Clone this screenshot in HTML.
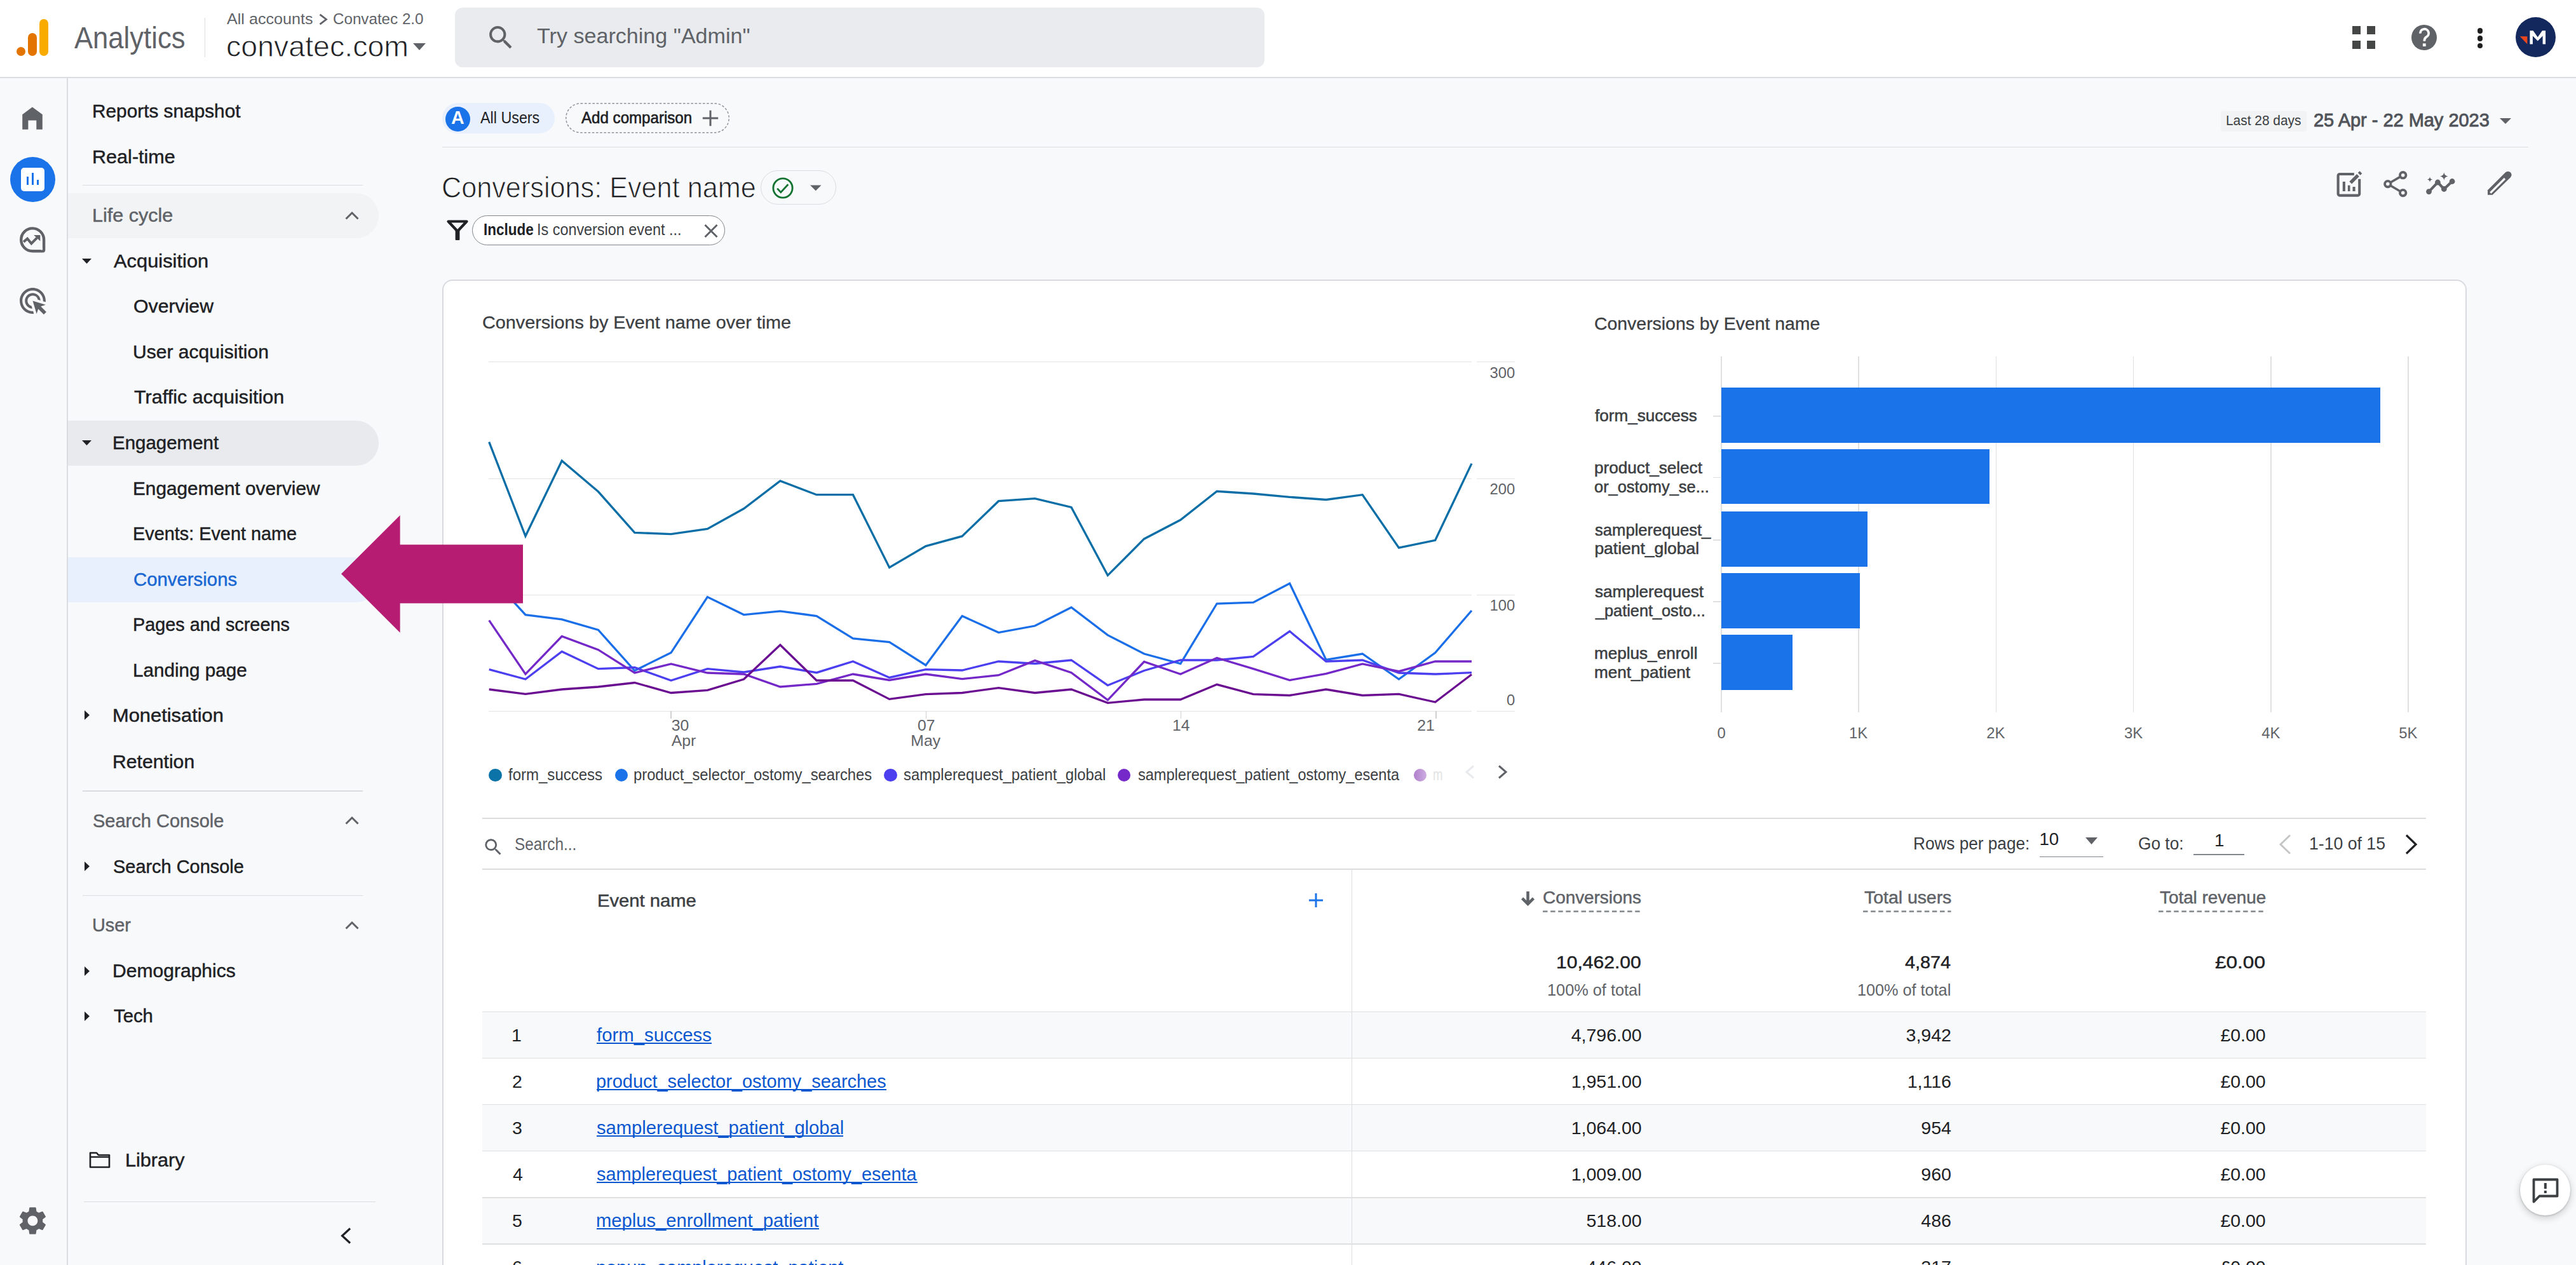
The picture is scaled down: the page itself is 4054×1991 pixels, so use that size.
<!DOCTYPE html>
<html><head><meta charset="utf-8"><title>Analytics</title>
<style>
html,body{margin:0;padding:0;}
body{width:4054px;height:1991px;overflow:hidden;position:relative;background:#f8f9fa;
font-family:"Liberation Sans", sans-serif;}
.t{position:absolute;white-space:pre;line-height:1;transform-origin:0 0;}
svg{overflow:visible;}
</style></head><body>
<div style="position:absolute;left:0.00px;top:0.00px;width:4054.00px;height:121.00px;background:#ffffff;"></div>
<div style="position:absolute;left:0.00px;top:121.00px;width:4054.00px;height:1.50px;background:#dadce0;"></div>
<div style="position:absolute;left:25.5px;top:74px;width:14px;height:14px;border-radius:7px;background:#e37400"></div>
<div style="position:absolute;left:44.3px;top:51.5px;width:14.2px;height:36px;border-radius:7.1px;background:#e37400"></div>
<div style="position:absolute;left:62.2px;top:29.5px;width:14.2px;height:58px;border-radius:7.1px;background:#f9ab00"></div>
<div style="position:absolute;left:321.50px;top:28.00px;width:1.80px;height:62.00px;background:#dadce0;"></div>
<svg style="position:absolute;left:501.00px;top:21.00px;" width="16.00" height="19.00" viewBox="0 0 16 19"><path d="M2.5 1.8 12.5 9.5 2.5 17.2" fill="none" stroke="#5f6368" stroke-width="2.8"/></svg>
<svg style="position:absolute;left:650.00px;top:68.00px;" width="20.00" height="11.00" viewBox="0 0 20 11"><path d="M0 0h20L10 11z" fill="#5f6368"/></svg>
<div style="position:absolute;left:716.00px;top:11.50px;width:1274.00px;height:94.50px;background:#e9ebee;border-radius:12px;"></div>
<svg style="position:absolute;left:763.90px;top:34.70px;" width="48.60" height="48.60" viewBox="0 0 24 24"><path d="M15.5 14h-.79l-.28-.27A6.47 6.47 0 0 0 16 9.5 6.5 6.5 0 1 0 9.5 16c1.61 0 3.09-.59 4.23-1.57l.27.28v.79l5 4.99L20.49 19zm-6 0C7.01 14 5 11.99 5 9.5S7.01 5 9.5 5 14 7.01 14 9.5 11.99 14 9.5 14" fill="#5f6368"/></svg>
<div style="position:absolute;left:3702.00px;top:41.00px;width:13.00px;height:13.00px;background:#444746;"></div>
<div style="position:absolute;left:3724.50px;top:41.00px;width:13.00px;height:13.00px;background:#444746;"></div>
<div style="position:absolute;left:3702.00px;top:63.50px;width:13.00px;height:13.00px;background:#444746;"></div>
<div style="position:absolute;left:3724.50px;top:63.50px;width:13.00px;height:13.00px;background:#444746;"></div>
<div style="position:absolute;left:3795.1px;top:38.7px;width:40.4px;height:40.4px;border-radius:21px;background:#5f6368"></div>
<svg style="position:absolute;left:0.00px;top:0.00px;" width="4054.00" height="130.00" viewBox="0 0 4054 130"><path d="M3808.9 52.6a6.6 6.6 0 1 1 9.6 5.6c-2.4 1.4-3.2 2.9-3.2 6.6" fill="none" stroke="#ffffff" stroke-width="3.7"/><rect x="3812.9" y="68.4" width="4.8" height="4.6" fill="#ffffff"/></svg>
<div style="position:absolute;left:3898.7px;top:44.0px;width:8.6px;height:8.6px;border-radius:5px;background:#1f1f1f"></div>
<div style="position:absolute;left:3898.7px;top:56.0px;width:8.6px;height:8.6px;border-radius:5px;background:#1f1f1f"></div>
<div style="position:absolute;left:3898.7px;top:67.9px;width:8.6px;height:8.6px;border-radius:5px;background:#1f1f1f"></div>
<div style="position:absolute;left:3958.6px;top:27.1px;width:63px;height:63px;border-radius:32px;background:#13285c"></div>
<svg style="position:absolute;left:0.00px;top:0.00px;" width="4054.00" height="130.00" viewBox="0 0 4054 130"><path d="M3965.7 57.3H3977.3V69.5Z" fill="#e8461e"/><path d="M3981.4 69.5V48.3H3986.6L3993.75 58.6 4000.9 48.3H4006.1V69.5H4001.6V56.6L3993.75 64.6 3985.9 56.6V69.5Z" fill="#ffffff"/></svg>
<div style="position:absolute;left:0.00px;top:122.50px;width:105.00px;height:1868.50px;background:#f8f9fa;"></div>
<div style="position:absolute;left:105.00px;top:122.50px;width:1.50px;height:1868.50px;background:#dadce0;"></div>
<svg style="position:absolute;left:0;top:0" width="120" height="220" viewBox="0 0 120 220"><path d="M35.2 203.7V180.2L50.9 168.5 66.8 180.2V203.7H57.3V189.6H44.4V203.7Z" fill="#5f6368"/></svg>
<div style="position:absolute;left:15.6px;top:246.6px;width:71.6px;height:71.6px;border-radius:36px;background:#1a73e8"></div>
<div style="position:absolute;left:33px;top:263.5px;width:37px;height:37px;border-radius:5px;background:#ffffff"></div>
<div style="position:absolute;left:41.60px;top:278.00px;width:3.30px;height:12.80px;background:#1a73e8;"></div>
<div style="position:absolute;left:49.90px;top:272.30px;width:3.00px;height:18.50px;background:#1a73e8;"></div>
<div style="position:absolute;left:58.00px;top:283.30px;width:3.20px;height:7.50px;background:#1a73e8;"></div>
<svg style="position:absolute;left:31.40px;top:357.50px;" width="40.30" height="39.00" viewBox="0 0 40.3 39"><path d="M38.1 19.5A17.95 17.95 0 1 0 20.15 37.3H36.1Q38.1 37.3 38.1 35.3Z" fill="none" stroke="#5f6368" stroke-width="4.4"/><polyline points="6.1,22.8 12.1,17.7 18.4,25.2 27.2,16.4" fill="none" stroke="#5f6368" stroke-width="4"/><path d="M22.2 12.1H32.3V21.5Z" fill="#5f6368"/><circle cx="34.6" cy="34" r="1.6" fill="#f8f9fa"/></svg>
<svg style="position:absolute;left:26.60px;top:448.50px;" width="49.00" height="49.00" viewBox="0 0 24 24"><path d="M11.71 17.99A5.993 5.993 0 0 1 6 12c0-3.31 2.69-6 6-6 3.22 0 5.84 2.53 5.99 5.71l-2.1-.63A3.999 3.999 0 0 0 12 8c-2.21 0-4 1.79-4 4 0 1.89 1.31 3.47 3.08 3.89zM22 12c0 .3-.01.6-.04.9l-1.97-.59c.01-.1.01-.21.01-.31 0-4.42-3.58-8-8-8s-8 3.58-8 8 3.58 8 8 8c.1 0 .21 0 .31-.01l.59 1.97c-.3.03-.6.04-.9.04-5.52 0-10-4.48-10-10S6.48 2 12 2s10 4.48 10 10m-3.77 4.26L22 15l-10-3 3 10 1.26-3.77 4.27 4.27 1.98-1.98z" fill="#5f6368"/></svg>
<svg style="position:absolute;left:24.90px;top:1895.00px;" width="52.80" height="52.80" viewBox="0 0 24 24"><path d="M19.14 12.94c.04-.3.06-.61.06-.94 0-.32-.02-.64-.07-.94l2.03-1.58a.49.49 0 0 0 .12-.61l-1.92-3.32a.488.488 0 0 0-.59-.22l-2.39.96c-.5-.38-1.03-.7-1.62-.94l-.36-2.54a.484.484 0 0 0-.48-.41h-3.84c-.24 0-.43.17-.47.41l-.36 2.54c-.59.24-1.13.57-1.62.94l-2.39-.96c-.22-.08-.47 0-.59.22L2.74 8.87c-.12.21-.08.47.12.61l2.03 1.58c-.05.3-.09.63-.09.94s.02.64.07.94l-2.03 1.58a.49.49 0 0 0-.12.61l1.92 3.32c.12.22.37.29.59.22l2.39-.96c.5.38 1.03.7 1.62.94l.36 2.54c.05.24.24.41.48.41h3.84c.24 0 .44-.17.47-.41l.36-2.54c.59-.24 1.13-.56 1.62-.94l2.39.96c.22.08.47 0 .59-.22l1.92-3.32c.12-.22.07-.47-.12-.61zM12 15.6c-1.98 0-3.6-1.62-3.6-3.6s1.62-3.6 3.6-3.6 3.6 1.62 3.6 3.6-1.62 3.6-3.6 3.6" fill="#5f6368"/></svg>
<div style="position:absolute;left:106.5px;top:304px;width:489.5px;height:71px;border-radius:0 36px 36px 0;background:#f1f3f4"></div>
<div style="position:absolute;left:106.5px;top:662px;width:489.5px;height:71px;border-radius:0 36px 36px 0;background:#e8eaed"></div>
<div style="position:absolute;left:106.5px;top:877px;width:489.5px;height:71px;border-radius:0 36px 36px 0;background:#e8f0fe"></div>
<div style="position:absolute;left:130.00px;top:290.50px;width:441.00px;height:1.50px;background:#dadce0;"></div>
<svg style="position:absolute;left:542.00px;top:331.00px;" width="24.00" height="16.00" viewBox="0 0 24 16"><path d="M2.5 13.5 12 4l9.5 9.5" fill="none" stroke="#5f6368" stroke-width="3"/></svg>
<svg style="position:absolute;left:128.50px;top:407.00px;" width="15.00" height="8.00" viewBox="0 0 15 8"><path d="M0 0h15L7.5 8z" fill="#202124"/></svg>
<svg style="position:absolute;left:128.50px;top:693.00px;" width="15.00" height="8.00" viewBox="0 0 15 8"><path d="M0 0h15L7.5 8z" fill="#202124"/></svg>
<svg style="position:absolute;left:132.60px;top:1117.50px;" width="8.00" height="15.00" viewBox="0 0 8 15"><path d="M0 0v15L8 7.5z" fill="#202124"/></svg>
<div style="position:absolute;left:130.00px;top:1244.00px;width:441.00px;height:1.50px;background:#dadce0;"></div>
<svg style="position:absolute;left:542.00px;top:1282.50px;" width="24.00" height="16.00" viewBox="0 0 24 16"><path d="M2.5 13.5 12 4l9.5 9.5" fill="none" stroke="#5f6368" stroke-width="3"/></svg>
<svg style="position:absolute;left:132.60px;top:1356.00px;" width="8.00" height="15.00" viewBox="0 0 8 15"><path d="M0 0v15L8 7.5z" fill="#202124"/></svg>
<div style="position:absolute;left:130.00px;top:1408.50px;width:441.00px;height:1.50px;background:#dadce0;"></div>
<svg style="position:absolute;left:542.00px;top:1447.50px;" width="24.00" height="16.00" viewBox="0 0 24 16"><path d="M2.5 13.5 12 4l9.5 9.5" fill="none" stroke="#5f6368" stroke-width="3"/></svg>
<svg style="position:absolute;left:132.60px;top:1520.50px;" width="8.00" height="15.00" viewBox="0 0 8 15"><path d="M0 0v15L8 7.5z" fill="#202124"/></svg>
<svg style="position:absolute;left:132.60px;top:1591.50px;" width="8.00" height="15.00" viewBox="0 0 8 15"><path d="M0 0v15L8 7.5z" fill="#202124"/></svg>
<svg style="position:absolute;left:139.00px;top:1810.00px;" width="36.00" height="30.00" viewBox="0 0 36 30"><path d="M3 4.5h10l3 3.5h17v19H3z" fill="none" stroke="#202124" stroke-width="2.6" stroke-linejoin="round"/><path d="M3 11h30" stroke="#202124" stroke-width="2.4"/></svg>
<div style="position:absolute;left:132.00px;top:1890.50px;width:459.00px;height:1.50px;background:#dadce0;"></div>
<svg style="position:absolute;left:532.00px;top:1931.00px;" width="24.00" height="28.00" viewBox="0 0 24 28"><path d="M19 2.5 6.5 14 19 25.5" fill="none" stroke="#202124" stroke-width="3.2"/></svg>
<div style="position:absolute;left:696.4px;top:162.4px;width:177px;height:47.8px;border-radius:24px;background:#e8f0fe"></div>
<div style="position:absolute;left:700.6px;top:167.5px;width:39px;height:39px;border-radius:20px;background:#1a73e8"></div>
<svg style="position:absolute;left:889.80px;top:162.40px;" width="258.00" height="47.50" viewBox="0 0 258 47.5"><rect x="0.75" y="0.75" width="256.5" height="46" rx="23" fill="none" stroke="#8f9499" stroke-width="1.5" stroke-dasharray="3.6 2.6"/></svg>
<svg style="position:absolute;left:1105.00px;top:173.00px;" width="26.00" height="26.00" viewBox="0 0 26 26"><path d="M13 0.8v24.4M0.8 13h24.4" stroke="#5f6368" stroke-width="3"/></svg>
<div style="position:absolute;left:696.00px;top:230.50px;width:3283.00px;height:1.50px;background:#dadce0;"></div>
<div style="position:absolute;left:3495.00px;top:174.60px;width:135.00px;height:32.40px;background:#f1f3f4;border-radius:3px;"></div>
<svg style="position:absolute;left:3934.00px;top:186.00px;" width="18.00" height="9.00" viewBox="0 0 18 9"><path d="M0 0h18L9 9z" fill="#5f6368"/></svg>
<div style="position:absolute;left:1197.2px;top:267.6px;width:118.6px;height:54.8px;border-radius:28px;border:1.6px solid #dadce0;box-sizing:border-box"></div>
<svg style="position:absolute;left:1215.00px;top:278.50px;" width="34.00" height="34.00" viewBox="0 0 34 34"><circle cx="17" cy="17" r="15.1" fill="none" stroke="#137333" stroke-width="2.9"/><path d="M8.2 17.6l5.6 6L25.3 11.2" fill="none" stroke="#137333" stroke-width="2.8"/></svg>
<svg style="position:absolute;left:1275.00px;top:291.00px;" width="17.50" height="9.50" viewBox="0 0 18 9"><path d="M0 0h18L9 9z" fill="#5f6368"/></svg>
<svg style="position:absolute;left:0;top:0" width="4054" height="1991" viewBox="0 0 4054 1991"><path d="M3704.8 273.95H3682.1a2.5 2.5 0 0 0-2.5 2.5V305.1a2.5 2.5 0 0 0 2.5 2.5H3710.7a2.5 2.5 0 0 0 2.5-2.5V281.8" fill="none" stroke="#5f6368" stroke-width="4.1"/><path d="M3699.2 287.6 3710.9 275.9M3712.7 273.9 3715.4 271.2" stroke="#5f6368" stroke-width="5.4"/><rect x="3686.8" y="285.9" width="4.1" height="15.1" fill="#5f6368"/><rect x="3694.9" y="291.7" width="3.6" height="9.3" fill="#5f6368"/><rect x="3702.5" y="294" width="4.1" height="7" fill="#5f6368"/><circle cx="3781.7" cy="275.7" r="4.7" fill="none" stroke="#5f6368" stroke-width="3.9"/><circle cx="3757.8" cy="289.6" r="4.7" fill="none" stroke="#5f6368" stroke-width="3.9"/><circle cx="3781.7" cy="303.6" r="4.7" fill="none" stroke="#5f6368" stroke-width="3.9"/><path d="M3761.9 287.2 3777.6 278.1M3761.9 292 3777.6 301.2" stroke="#5f6368" stroke-width="3.6"/><polyline points="3822.5,301.6 3836.4,287 3846.3,297.5 3859.1,285.5" fill="none" stroke="#5f6368" stroke-width="4.2"/><circle cx="3822.5" cy="301.6" r="4.4" fill="#5f6368"/><circle cx="3836.4" cy="287" r="4.4" fill="#5f6368"/><circle cx="3846.3" cy="297.5" r="4.4" fill="#5f6368"/><circle cx="3859.1" cy="285.5" r="4.4" fill="#5f6368"/><path d="M3846.3 271.3Q3847.0440000000003 276.756 3852.5 277.5Q3847.0440000000003 278.244 3846.3 283.7Q3845.556 278.244 3840.1000000000004 277.5Q3845.556 276.756 3846.3 271.3Z" fill="#5f6368"/><path d="M3824 278.2Q3824.504 281.89599999999996 3828.2 282.4Q3824.504 282.904 3824 286.59999999999997Q3823.496 282.904 3819.8 282.4Q3823.496 281.89599999999996 3824 278.2Z" fill="#5f6368"/><path d="M3915 306.8V299.3L3943 271.3a5.6 5.6 0 0 1 7.9 0a5.6 5.6 0 0 1 0 7.9L3922.6 306.8Z" fill="#5f6368"/><path d="M3919.3 303.6 3942 281" stroke="#f8f9fa" stroke-width="3.2"/></svg>
<svg style="position:absolute;left:703.00px;top:346.00px;" width="34.00" height="34.00" viewBox="0 0 34 34"><path d="M2.5 2.5h29L17 18z" fill="none" stroke="#202124" stroke-width="4.2" stroke-linejoin="round"/><rect x="13.6" y="16" width="6.8" height="16" rx="1" fill="#202124"/></svg>
<div style="position:absolute;left:743.2px;top:339px;width:397.7px;height:47.3px;border-radius:24px;border:1.6px solid #80868b;box-sizing:border-box;background:#ffffff"></div>
<svg style="position:absolute;left:1108.00px;top:352.50px;" width="22.00" height="21.00" viewBox="0 0 22 21"><path d="M1.5 1 20.5 20M20.5 1 1.5 20" stroke="#5f6368" stroke-width="3"/></svg>
<div style="position:absolute;left:696px;top:439.5px;width:3185.5px;height:1700px;border-radius:16px;border:2px solid #d8dadf;box-sizing:border-box;background:#ffffff"></div>
<div style="position:absolute;left:769.00px;top:569.20px;width:1547.00px;height:1.20px;background:#e3e3e3;"></div>
<div style="position:absolute;left:2324.00px;top:569.20px;width:60.00px;height:1.20px;background:#e3e3e3;"></div>
<div style="position:absolute;left:769.00px;top:752.60px;width:1547.00px;height:1.20px;background:#e3e3e3;"></div>
<div style="position:absolute;left:2324.00px;top:752.60px;width:60.00px;height:1.20px;background:#e3e3e3;"></div>
<div style="position:absolute;left:769.00px;top:935.80px;width:1547.00px;height:1.20px;background:#e3e3e3;"></div>
<div style="position:absolute;left:2324.00px;top:935.80px;width:60.00px;height:1.20px;background:#e3e3e3;"></div>
<div style="position:absolute;left:769.00px;top:1118.80px;width:1547.00px;height:1.20px;background:#e3e3e3;"></div>
<div style="position:absolute;left:2324.00px;top:1118.80px;width:60.00px;height:1.20px;background:#e3e3e3;"></div>
<div style="position:absolute;left:1055.20px;top:1119.00px;width:1.60px;height:12.00px;background:#d0d0d0;"></div>
<div style="position:absolute;left:1456.60px;top:1119.00px;width:1.60px;height:12.00px;background:#d0d0d0;"></div>
<div style="position:absolute;left:1857.90px;top:1119.00px;width:1.60px;height:12.00px;background:#d0d0d0;"></div>
<div style="position:absolute;left:2259.00px;top:1119.00px;width:1.60px;height:12.00px;background:#d0d0d0;"></div>
<svg style="position:absolute;left:0;top:0" width="4054" height="1991" viewBox="0 0 4054 1991"><polyline points="769.70,695.60 826.97,843.80 884.24,725.20 941.51,773.80 998.78,838.30 1056.05,840.70 1113.32,832.50 1170.59,800.50 1227.86,756.90 1285.13,778.70 1342.40,778.70 1399.67,893.20 1456.94,859.60 1514.21,843.90 1571.48,788.70 1628.75,784.60 1686.02,798.40 1743.29,905.60 1800.56,848.20 1857.83,818.30 1915.10,773.30 1972.37,777.00 2029.64,782.30 2086.91,786.50 2144.18,778.70 2201.45,862.20 2258.72,850.30 2315.99,729.60" fill="none" stroke="#0b6ea6" stroke-width="3.3" stroke-linejoin="miter" stroke-miterlimit="3"/><polyline points="769.70,905.00 826.97,967.60 884.24,974.90 941.51,991.50 998.78,1055.50 1056.05,1027.30 1113.32,939.60 1170.59,967.60 1227.86,961.80 1285.13,969.50 1342.40,1005.00 1399.67,1010.50 1456.94,1047.00 1514.21,969.60 1571.48,995.50 1628.75,985.00 1686.02,956.00 1743.29,999.60 1800.56,1029.00 1857.83,1044.50 1915.10,950.00 1972.37,948.20 2029.64,918.20 2086.91,1038.50 2144.18,1029.00 2201.45,1069.00 2258.72,1027.30 2315.99,961.00" fill="none" stroke="#1a6fe8" stroke-width="3.3" stroke-linejoin="miter" stroke-miterlimit="3"/><polyline points="769.70,1053.60 826.97,1069.00 884.24,1025.50 941.51,1052.70 998.78,1050.50 1056.05,1071.00 1113.32,1052.70 1170.59,1058.00 1227.86,1049.00 1285.13,1058.70 1342.40,1041.00 1399.67,1066.40 1456.94,1053.60 1514.21,1055.00 1571.48,1041.00 1628.75,1044.50 1686.02,1039.00 1743.29,1078.70 1800.56,1055.50 1857.83,1039.00 1915.10,1039.00 1972.37,1033.30 2029.64,993.60 2086.91,1041.00 2144.18,1039.00 2201.45,1059.00 2258.72,1061.00 2315.99,1058.70" fill="none" stroke="#4b3ff0" stroke-width="3.3" stroke-linejoin="miter" stroke-miterlimit="3"/><polyline points="769.70,976.40 826.97,1061.00 884.24,1001.50 941.51,1022.70 998.78,1059.00 1056.05,1045.00 1113.32,1059.00 1170.59,1061.00 1227.86,1081.00 1285.13,1076.40 1342.40,1061.00 1399.67,1070.50 1456.94,1061.00 1514.21,1068.70 1571.48,1062.70 1628.75,1039.60 1686.02,1058.70 1743.29,1101.80 1800.56,1041.50 1857.83,1061.00 1915.10,1035.50 1972.37,1052.70 2029.64,1070.50 2086.91,1060.40 2144.18,1045.00 2201.45,1056.70 2258.72,1041.00 2315.99,1041.00" fill="none" stroke="#7528c8" stroke-width="3.3" stroke-linejoin="miter" stroke-miterlimit="3"/><polyline points="769.70,1085.00 826.97,1092.40 884.24,1085.00 941.51,1081.00 998.78,1074.50 1056.05,1090.50 1113.32,1086.40 1170.59,1069.00 1227.86,1015.00 1285.13,1071.00 1342.40,1071.00 1399.67,1100.40 1456.94,1092.70 1514.21,1090.50 1571.48,1082.70 1628.75,1090.50 1686.02,1085.00 1743.29,1106.40 1800.56,1101.00 1857.83,1101.00 1915.10,1077.30 1972.37,1092.70 2029.64,1094.50 2086.91,1085.00 2144.18,1094.50 2201.45,1092.40 2258.72,1105.00 2315.99,1061.50" fill="none" stroke="#6a0d91" stroke-width="3.3" stroke-linejoin="miter" stroke-miterlimit="3"/></svg>
<div style="position:absolute;left:769.10px;top:1209.70px;width:20.6px;height:20.6px;border-radius:11px;background:#0b73a8"></div>
<div style="position:absolute;left:967.70px;top:1209.70px;width:20.6px;height:20.6px;border-radius:11px;background:#1a73e8"></div>
<div style="position:absolute;left:1391.20px;top:1209.70px;width:20.6px;height:20.6px;border-radius:11px;background:#4b3ff0"></div>
<div style="position:absolute;left:1758.60px;top:1209.70px;width:20.6px;height:20.6px;border-radius:11px;background:#7529c9"></div>
<div style="position:absolute;left:2224.5px;top:1209.8px;width:20.6px;height:20.6px;border-radius:11px;background:linear-gradient(90deg,#b17fcd,#cdaee0)"></div>
<svg style="position:absolute;left:2305.00px;top:1204.00px;" width="16.00" height="22.00" viewBox="0 0 16 22"><path d="M14 1.5 3 11l11 9.5" fill="none" stroke="#e8eaed" stroke-width="3"/></svg>
<svg style="position:absolute;left:2357.00px;top:1204.00px;" width="16.00" height="22.00" viewBox="0 0 16 22"><path d="M2 1.5 13 11 2 20.5" fill="none" stroke="#5f6368" stroke-width="3"/></svg>
<div style="position:absolute;left:2708.10px;top:560.50px;width:1.80px;height:560.50px;background:#e0e0e0;"></div>
<div style="position:absolute;left:2924.30px;top:560.50px;width:1.80px;height:560.50px;background:#e0e0e0;"></div>
<div style="position:absolute;left:3140.50px;top:560.50px;width:1.80px;height:560.50px;background:#e0e0e0;"></div>
<div style="position:absolute;left:3356.70px;top:560.50px;width:1.80px;height:560.50px;background:#e0e0e0;"></div>
<div style="position:absolute;left:3572.90px;top:560.50px;width:1.80px;height:560.50px;background:#e0e0e0;"></div>
<div style="position:absolute;left:3789.10px;top:560.50px;width:1.80px;height:560.50px;background:#e0e0e0;"></div>
<div style="position:absolute;left:2709.00px;top:609.70px;width:1036.50px;height:87.20px;background:#1a73e8;"></div>
<div style="position:absolute;left:2696.00px;top:654.00px;width:13.00px;height:1.60px;background:#e0e0e0;"></div>
<div style="position:absolute;left:2709.00px;top:706.80px;width:421.50px;height:86.60px;background:#1a73e8;"></div>
<div style="position:absolute;left:2696.00px;top:750.80px;width:13.00px;height:1.60px;background:#e0e0e0;"></div>
<div style="position:absolute;left:2709.00px;top:805.00px;width:229.50px;height:87.00px;background:#1a73e8;"></div>
<div style="position:absolute;left:2696.00px;top:849.20px;width:13.00px;height:1.60px;background:#e0e0e0;"></div>
<div style="position:absolute;left:2709.00px;top:902.00px;width:218.20px;height:87.00px;background:#1a73e8;"></div>
<div style="position:absolute;left:2696.00px;top:946.20px;width:13.00px;height:1.60px;background:#e0e0e0;"></div>
<div style="position:absolute;left:2709.00px;top:999.00px;width:111.50px;height:87.00px;background:#1a73e8;"></div>
<div style="position:absolute;left:2696.00px;top:1043.20px;width:13.00px;height:1.60px;background:#e0e0e0;"></div>
<div style="position:absolute;left:759.00px;top:1287.30px;width:3059.00px;height:1.50px;background:#dadce0;"></div>
<svg style="position:absolute;left:759.30px;top:1315.50px;" width="34.60" height="34.60" viewBox="0 0 24 24"><path d="M15.5 14h-.79l-.28-.27A6.47 6.47 0 0 0 16 9.5 6.5 6.5 0 1 0 9.5 16c1.61 0 3.09-.59 4.23-1.57l.27.28v.79l5 4.99L20.49 19zm-6 0C7.01 14 5 11.99 5 9.5S7.01 5 9.5 5 14 7.01 14 9.5 11.99 14 9.5 14" fill="#5f6368"/></svg>
<svg style="position:absolute;left:3282.00px;top:1318.00px;" width="19.00" height="11.00" viewBox="0 0 19 11"><path d="M0 0h19L9.5 11z" fill="#5f6368"/></svg>
<div style="position:absolute;left:3210.00px;top:1347.50px;width:100.00px;height:1.50px;background:#80868b;"></div>
<div style="position:absolute;left:3452.00px;top:1344.00px;width:79.50px;height:1.50px;background:#80868b;"></div>
<svg style="position:absolute;left:3583.00px;top:1312.00px;" width="26.00" height="34.00" viewBox="0 0 26 34"><path d="M21 2.5 6 17l15 14.5" fill="none" stroke="#c4c7c5" stroke-width="3"/></svg>
<svg style="position:absolute;left:3782.00px;top:1312.00px;" width="26.00" height="34.00" viewBox="0 0 26 34"><path d="M5 2.5 20 17 5 31.5" fill="none" stroke="#202124" stroke-width="3.2"/></svg>
<div style="position:absolute;left:759.00px;top:1367.20px;width:3059.00px;height:1.60px;background:#dadce0;"></div>
<div style="position:absolute;left:2126.50px;top:1368.00px;width:1.60px;height:623.00px;background:#dadce0;"></div>
<svg style="position:absolute;left:2059.00px;top:1405.00px;" width="24.00" height="24.00" viewBox="0 0 24 24"><path d="M12 1v22M1 12h22" stroke="#1a73e8" stroke-width="3"/></svg>
<svg style="position:absolute;left:2393.00px;top:1403.00px;" width="23.00" height="24.00" viewBox="0 0 23 24"><path d="M11.5 0v17" stroke="#5f6368" stroke-width="4.6"/><path d="M1 12.5 11.5 23 22 12.5 18.8 9.3 11.5 16.6 4.2 9.3z" fill="#5f6368"/></svg>
<svg style="position:absolute;left:2427.50px;top:1432.50px;" width="155.10" height="3.00" viewBox="0 0 155.10 3"><line x1="0" y1="1.5" x2="155.10" y2="1.5" stroke="#80868b" stroke-width="2.6" stroke-dasharray="7.5 4.6"/></svg>
<svg style="position:absolute;left:2931.80px;top:1432.50px;" width="138.50" height="3.00" viewBox="0 0 138.50 3"><line x1="0" y1="1.5" x2="138.50" y2="1.5" stroke="#80868b" stroke-width="2.6" stroke-dasharray="7.5 4.6"/></svg>
<svg style="position:absolute;left:3396.70px;top:1432.50px;" width="168.80" height="3.00" viewBox="0 0 168.80 3"><line x1="0" y1="1.5" x2="168.80" y2="1.5" stroke="#80868b" stroke-width="2.6" stroke-dasharray="7.5 4.6"/></svg>
<div style="position:absolute;left:759.00px;top:1591.55px;width:3059.00px;height:1.50px;background:#e0e0e0;"></div>
<div style="position:absolute;left:759.00px;top:1593.05px;width:1367.50px;height:71.62px;background:#f8f9fa;"></div>
<div style="position:absolute;left:2128.10px;top:1593.05px;width:1689.90px;height:71.62px;background:#f8f9fa;"></div>
<div style="position:absolute;left:759.00px;top:1664.67px;width:3059.00px;height:1.50px;background:#e0e0e0;"></div>
<div style="position:absolute;left:938.80px;top:1640.70px;width:181.20px;height:2.00px;background:#0b57d0;"></div>
<div style="position:absolute;left:759.00px;top:1737.79px;width:3059.00px;height:1.50px;background:#e0e0e0;"></div>
<div style="position:absolute;left:938.80px;top:1713.82px;width:455.90px;height:2.00px;background:#0b57d0;"></div>
<div style="position:absolute;left:759.00px;top:1739.29px;width:1367.50px;height:71.62px;background:#f8f9fa;"></div>
<div style="position:absolute;left:2128.10px;top:1739.29px;width:1689.90px;height:71.62px;background:#f8f9fa;"></div>
<div style="position:absolute;left:759.00px;top:1810.91px;width:3059.00px;height:1.50px;background:#e0e0e0;"></div>
<div style="position:absolute;left:938.80px;top:1786.94px;width:388.70px;height:2.00px;background:#0b57d0;"></div>
<div style="position:absolute;left:759.00px;top:1884.03px;width:3059.00px;height:1.50px;background:#e0e0e0;"></div>
<div style="position:absolute;left:938.80px;top:1860.06px;width:505.20px;height:2.00px;background:#0b57d0;"></div>
<div style="position:absolute;left:759.00px;top:1885.53px;width:1367.50px;height:71.62px;background:#f8f9fa;"></div>
<div style="position:absolute;left:2128.10px;top:1885.53px;width:1689.90px;height:71.62px;background:#f8f9fa;"></div>
<div style="position:absolute;left:759.00px;top:1957.15px;width:3059.00px;height:1.50px;background:#e0e0e0;"></div>
<div style="position:absolute;left:938.80px;top:1933.18px;width:350.20px;height:2.00px;background:#0b57d0;"></div>
<div style="position:absolute;left:759.00px;top:2030.27px;width:3059.00px;height:1.50px;background:#e0e0e0;"></div>
<div style="position:absolute;left:938.80px;top:2006.30px;width:389.20px;height:2.00px;background:#0b57d0;"></div>
<div class="t " style="left:117.00px;top:36.29px;font-size:47.38px;color:#5f6368;font-weight:400;transform:scaleX(0.9208);">Analytics</div>
<div class="t " style="left:357.00px;top:18.95px;font-size:23.69px;color:#5f6368;font-weight:400;transform:scaleX(1.0609);">All accounts</div>
<div class="t " style="left:524.48px;top:18.95px;font-size:23.69px;color:#5f6368;font-weight:400;transform:scaleX(1.0209);">Convatec 2.0</div>
<div class="t " style="left:355.98px;top:51.17px;font-size:45.64px;color:#202124;font-weight:400;transform:scaleX(1.0199);-webkit-text-stroke:0.8px #ffffff;">convatec.com</div>
<div class="t " style="left:845.00px;top:40.62px;font-size:32.70px;color:#5f6368;font-weight:400;transform:scaleX(1.0432);">Try searching "Admin"</div>
<div class="t " style="left:144.95px;top:161.39px;font-size:29.07px;color:#202124;font-weight:400;transform:scaleX(1.0252);-webkit-text-stroke:0.45px currentColor;">Reports snapshot</div>
<div class="t " style="left:144.90px;top:232.89px;font-size:29.07px;color:#202124;font-weight:400;transform:scaleX(1.0521);-webkit-text-stroke:0.45px currentColor;">Real-time</div>
<div class="t " style="left:144.90px;top:325.39px;font-size:29.07px;color:#5f6368;font-weight:400;transform:scaleX(1.0510);-webkit-text-stroke:0.45px currentColor;">Life cycle</div>
<div class="t " style="left:179.00px;top:397.39px;font-size:29.07px;color:#202124;font-weight:400;transform:scaleX(1.0618);-webkit-text-stroke:0.45px currentColor;">Acquisition</div>
<div class="t " style="left:209.96px;top:468.39px;font-size:29.07px;color:#202124;font-weight:400;transform:scaleX(1.0402);-webkit-text-stroke:0.45px currentColor;">Overview</div>
<div class="t " style="left:208.93px;top:540.39px;font-size:29.07px;color:#202124;font-weight:400;transform:scaleX(1.0344);-webkit-text-stroke:0.45px currentColor;">User acquisition</div>
<div class="t " style="left:211.00px;top:611.39px;font-size:29.07px;color:#202124;font-weight:400;transform:scaleX(1.0521);-webkit-text-stroke:0.45px currentColor;">Traffic acquisition</div>
<div class="t " style="left:176.97px;top:683.39px;font-size:29.07px;color:#202124;font-weight:400;transform:scaleX(1.0139);-webkit-text-stroke:0.45px currentColor;">Engagement</div>
<div class="t " style="left:208.95px;top:754.89px;font-size:29.07px;color:#202124;font-weight:400;transform:scaleX(1.0242);-webkit-text-stroke:0.45px currentColor;">Engagement overview</div>
<div class="t " style="left:209.01px;top:826.39px;font-size:29.07px;color:#202124;font-weight:400;transform:scaleX(0.9925);-webkit-text-stroke:0.45px currentColor;">Events: Event name</div>
<div class="t " style="left:209.99px;top:898.39px;font-size:29.07px;color:#1967d2;font-weight:400;transform:scaleX(1.0100);-webkit-text-stroke:0.45px currentColor;">Conversions</div>
<div class="t " style="left:209.02px;top:969.39px;font-size:29.07px;color:#202124;font-weight:400;transform:scaleX(0.9924);-webkit-text-stroke:0.45px currentColor;">Pages and screens</div>
<div class="t " style="left:208.96px;top:1041.39px;font-size:29.07px;color:#202124;font-weight:400;transform:scaleX(1.0202);-webkit-text-stroke:0.45px currentColor;">Landing page</div>
<div class="t " style="left:177.18px;top:1112.39px;font-size:29.07px;color:#202124;font-weight:400;transform:scaleX(1.0611);-webkit-text-stroke:0.45px currentColor;">Monetisation</div>
<div class="t " style="left:177.22px;top:1184.89px;font-size:29.07px;color:#202124;font-weight:400;transform:scaleX(1.0384);-webkit-text-stroke:0.45px currentColor;">Retention</div>
<div class="t " style="left:146.30px;top:1278.39px;font-size:29.07px;color:#5f6368;font-weight:400;transform:scaleX(0.9979);-webkit-text-stroke:0.45px currentColor;">Search Console</div>
<div class="t " style="left:178.30px;top:1349.89px;font-size:29.07px;color:#202124;font-weight:400;transform:scaleX(0.9955);-webkit-text-stroke:0.45px currentColor;">Search Console</div>
<div class="t " style="left:145.31px;top:1441.89px;font-size:29.07px;color:#5f6368;font-weight:400;transform:scaleX(0.9936);-webkit-text-stroke:0.45px currentColor;">User</div>
<div class="t " style="left:177.23px;top:1514.39px;font-size:29.07px;color:#202124;font-weight:400;transform:scaleX(1.0344);-webkit-text-stroke:0.45px currentColor;">Demographics</div>
<div class="t " style="left:179.30px;top:1585.39px;font-size:29.07px;color:#202124;font-weight:400;transform:scaleX(1.0079);-webkit-text-stroke:0.45px currentColor;">Tech</div>
<div class="t " style="left:196.89px;top:1812.39px;font-size:29.07px;color:#202124;font-weight:400;transform:scaleX(1.0538);-webkit-text-stroke:0.45px currentColor;">Library</div>
<div class="t " style="left:710.10px;top:171.06px;font-size:28.63px;color:#ffffff;font-weight:700;">A</div>
<div class="t " style="left:756.00px;top:173.04px;font-size:25.00px;color:#202124;font-weight:400;transform:scaleX(0.9325);">All Users</div>
<div class="t " style="left:915.40px;top:173.04px;font-size:25.00px;color:#202124;font-weight:400;transform:scaleX(0.9641);-webkit-text-stroke:0.6px currentColor;">Add comparison</div>
<div class="t " style="left:3503.05px;top:178.70px;font-size:22.09px;color:#3c4043;font-weight:400;transform:scaleX(0.9464);">Last 28 days</div>
<div class="t " style="left:3641.02px;top:174.23px;font-size:29.51px;color:#50545a;font-weight:400;transform:scaleX(0.9813);-webkit-text-stroke:0.9px currentColor;">25 Apr - 22 May 2023</div>
<div class="t " style="left:694.72px;top:273.42px;font-size:45.93px;color:#202124;font-weight:400;transform:scaleX(0.9409);-webkit-text-stroke:0.9px #f8f9fa;">Conversions: Event name</div>
<div class="t " style="left:760.52px;top:349.17px;font-size:25.44px;color:#202124;font-weight:700;transform:scaleX(0.8833);">Include</div>
<div class="t " style="left:844.96px;top:349.17px;font-size:25.44px;color:#3c4043;font-weight:400;transform:scaleX(0.9193);">Is conversion event ...</div>
<div class="t " style="left:758.88px;top:493.31px;font-size:28.34px;color:#3c4043;font-weight:400;transform:scaleX(1.0155);-webkit-text-stroke:0.3px currentColor;">Conversions by Event name over time</div>
<div class="t " style="left:2509.40px;top:494.51px;font-size:28.34px;color:#3c4043;font-weight:400;transform:scaleX(1.0030);-webkit-text-stroke:0.3px currentColor;">Conversions by Event name</div>
<div class="t " style="left:2344.50px;top:575.02px;font-size:23.84px;color:#5f6368;font-weight:400;">300</div>
<div class="t " style="left:2344.50px;top:757.52px;font-size:23.84px;color:#5f6368;font-weight:400;">200</div>
<div class="t " style="left:2344.50px;top:940.82px;font-size:23.84px;color:#5f6368;font-weight:400;">100</div>
<div class="t " style="left:2371.00px;top:1090.22px;font-size:23.84px;color:#5f6368;font-weight:400;">0</div>
<div class="t " style="left:1056.80px;top:1129.69px;font-size:24.71px;color:#5f6368;font-weight:400;">30</div>
<div class="t " style="left:1056.80px;top:1153.59px;font-size:24.71px;color:#5f6368;font-weight:400;">Apr</div>
<div class="t " style="left:1444.03px;top:1129.69px;font-size:24.71px;color:#5f6368;font-weight:400;">07</div>
<div class="t " style="left:1433.34px;top:1153.59px;font-size:24.71px;color:#5f6368;font-weight:400;">May</div>
<div class="t " style="left:1844.93px;top:1129.79px;font-size:24.71px;color:#5f6368;font-weight:400;">14</div>
<div class="t " style="left:2230.26px;top:1129.79px;font-size:24.71px;color:#5f6368;font-weight:400;">21</div>
<div class="t " style="left:800.00px;top:1207.39px;font-size:25.29px;color:#3c4043;font-weight:400;transform:scaleX(0.9497);">form_success</div>
<div class="t " style="left:997.46px;top:1207.39px;font-size:25.29px;color:#3c4043;font-weight:400;transform:scaleX(0.9400);">product_selector_ostomy_searches</div>
<div class="t " style="left:1421.70px;top:1207.39px;font-size:25.29px;color:#3c4043;font-weight:400;transform:scaleX(0.9437);">samplerequest_patient_global</div>
<div class="t " style="left:1791.00px;top:1207.39px;font-size:25.29px;color:#3c4043;font-weight:400;transform:scaleX(0.9316);">samplerequest_patient_ostomy_esenta</div>
<div class="t " style="left:2254.76px;top:1207.39px;font-size:25.29px;color:#e3e3e3;font-weight:400;transform:scaleX(0.7368);">m</div>
<div class="t " style="left:2702.50px;top:1142.12px;font-size:23.84px;color:#5f6368;font-weight:400;">0</div>
<div class="t " style="left:2910.07px;top:1142.12px;font-size:23.84px;color:#5f6368;font-weight:400;">1K</div>
<div class="t " style="left:3126.27px;top:1142.12px;font-size:23.84px;color:#5f6368;font-weight:400;">2K</div>
<div class="t " style="left:3342.97px;top:1142.12px;font-size:23.84px;color:#5f6368;font-weight:400;">3K</div>
<div class="t " style="left:3559.17px;top:1142.12px;font-size:23.84px;color:#5f6368;font-weight:400;">4K</div>
<div class="t " style="left:3775.37px;top:1142.12px;font-size:23.84px;color:#5f6368;font-weight:400;">5K</div>
<div class="t " style="left:2510.40px;top:641.11px;font-size:26.45px;color:#3c4043;font-weight:400;transform:scaleX(0.9861);-webkit-text-stroke:0.55px currentColor;">form_success</div>
<div class="t " style="left:2509.41px;top:723.11px;font-size:26.45px;color:#3c4043;font-weight:400;transform:scaleX(0.9883);-webkit-text-stroke:0.55px currentColor;">product_select</div>
<div class="t " style="left:2509.44px;top:752.81px;font-size:26.45px;color:#3c4043;font-weight:400;transform:scaleX(0.9614);-webkit-text-stroke:0.55px currentColor;">or_ostomy_se...</div>
<div class="t " style="left:2510.40px;top:820.61px;font-size:26.45px;color:#3c4043;font-weight:400;transform:scaleX(0.9692);-webkit-text-stroke:0.55px currentColor;">samplerequest_</div>
<div class="t " style="left:2509.40px;top:850.31px;font-size:26.45px;color:#3c4043;font-weight:400;-webkit-text-stroke:0.55px currentColor;">patient_global</div>
<div class="t " style="left:2510.40px;top:918.11px;font-size:26.45px;color:#3c4043;font-weight:400;transform:scaleX(0.9859);-webkit-text-stroke:0.55px currentColor;">samplerequest</div>
<div class="t " style="left:2511.36px;top:947.81px;font-size:26.45px;color:#3c4043;font-weight:400;transform:scaleX(0.9563);-webkit-text-stroke:0.55px currentColor;">_patient_osto...</div>
<div class="t " style="left:2509.41px;top:1015.11px;font-size:26.45px;color:#3c4043;font-weight:400;transform:scaleX(0.9870);-webkit-text-stroke:0.55px currentColor;">meplus_enroll</div>
<div class="t " style="left:2509.41px;top:1044.81px;font-size:26.45px;color:#3c4043;font-weight:400;transform:scaleX(0.9875);-webkit-text-stroke:0.55px currentColor;">ment_patient</div>
<div class="t " style="left:810.10px;top:1316.12px;font-size:27.04px;color:#5f6368;font-weight:400;transform:scaleX(0.8995);">Search...</div>
<div class="t " style="left:3011.10px;top:1313.63px;font-size:27.62px;color:#3c4043;font-weight:400;transform:scaleX(0.9478);">Rows per page:</div>
<div class="t " style="left:3209.50px;top:1307.43px;font-size:27.62px;color:#202124;font-weight:400;">10</div>
<div class="t " style="left:3365.05px;top:1313.63px;font-size:27.62px;color:#3c4043;font-weight:400;transform:scaleX(0.9514);">Go to:</div>
<div class="t " style="left:3485.00px;top:1308.63px;font-size:27.62px;color:#202124;font-weight:400;">1</div>
<div class="t " style="left:3634.07px;top:1313.63px;font-size:27.62px;color:#3c4043;font-weight:400;transform:scaleX(0.9649);">1-10 of 15</div>
<div class="t " style="left:939.52px;top:1403.96px;font-size:28.05px;color:#3c4043;font-weight:400;transform:scaleX(1.0403);-webkit-text-stroke:0.5px currentColor;">Event name</div>
<div class="t " style="left:2428.49px;top:1399.13px;font-size:27.62px;color:#5f6368;font-weight:400;transform:scaleX(1.0096);-webkit-text-stroke:0.5px currentColor;">Conversions</div>
<div class="t " style="left:2933.80px;top:1399.13px;font-size:27.62px;color:#5f6368;font-weight:400;transform:scaleX(1.0286);-webkit-text-stroke:0.5px currentColor;">Total users</div>
<div class="t " style="left:3398.70px;top:1399.13px;font-size:27.62px;color:#5f6368;font-weight:400;transform:scaleX(1.0084);-webkit-text-stroke:0.5px currentColor;">Total revenue</div>
<div class="t " style="left:2448.89px;top:1500.49px;font-size:28.49px;color:#202124;font-weight:400;transform:scaleX(1.0556);-webkit-text-stroke:0.45px currentColor;">10,462.00</div>
<div class="t " style="left:2435.09px;top:1545.11px;font-size:26.45px;color:#5f6368;font-weight:400;transform:scaleX(0.9574);">100% of total</div>
<div class="t " style="left:2998.00px;top:1500.49px;font-size:28.49px;color:#202124;font-weight:400;transform:scaleX(1.0084);-webkit-text-stroke:0.45px currentColor;">4,874</div>
<div class="t " style="left:2922.59px;top:1545.11px;font-size:26.45px;color:#5f6368;font-weight:400;transform:scaleX(0.9541);">100% of total</div>
<div class="t " style="left:3486.00px;top:1500.49px;font-size:28.49px;color:#202124;font-weight:400;transform:scaleX(1.1078);-webkit-text-stroke:0.45px currentColor;">£0.00</div>
<div class="t " style="left:805.00px;top:1614.79px;font-size:28.49px;color:#202124;font-weight:400;">1</div>
<div class="t " style="left:938.80px;top:1613.93px;font-size:29.51px;color:#0b57d0;font-weight:400;transform:scaleX(0.9944);">form_success</div>
<div class="t " style="left:2472.72px;top:1614.79px;font-size:28.49px;color:#202124;font-weight:400;">4,796.00</div>
<div class="t " style="left:2999.59px;top:1614.79px;font-size:28.49px;color:#202124;font-weight:400;">3,942</div>
<div class="t " style="left:3494.39px;top:1614.79px;font-size:28.49px;color:#202124;font-weight:400;">£0.00</div>
<div class="t " style="left:806.00px;top:1687.91px;font-size:28.49px;color:#202124;font-weight:400;">2</div>
<div class="t " style="left:937.82px;top:1687.05px;font-size:29.51px;color:#0b57d0;font-weight:400;transform:scaleX(0.9805);">product_selector_ostomy_searches</div>
<div class="t " style="left:2472.72px;top:1687.91px;font-size:28.49px;color:#202124;font-weight:400;">1,951.00</div>
<div class="t " style="left:3001.71px;top:1687.91px;font-size:28.49px;color:#202124;font-weight:400;">1,116</div>
<div class="t " style="left:3494.39px;top:1687.91px;font-size:28.49px;color:#202124;font-weight:400;">£0.00</div>
<div class="t " style="left:806.00px;top:1761.03px;font-size:28.49px;color:#202124;font-weight:400;">3</div>
<div class="t " style="left:938.80px;top:1760.17px;font-size:29.51px;color:#0b57d0;font-weight:400;transform:scaleX(0.9889);">samplerequest_patient_global</div>
<div class="t " style="left:2472.72px;top:1761.03px;font-size:28.49px;color:#202124;font-weight:400;">1,064.00</div>
<div class="t " style="left:3023.33px;top:1761.03px;font-size:28.49px;color:#202124;font-weight:400;">954</div>
<div class="t " style="left:3494.39px;top:1761.03px;font-size:28.49px;color:#202124;font-weight:400;">£0.00</div>
<div class="t " style="left:807.00px;top:1834.15px;font-size:28.49px;color:#202124;font-weight:400;">4</div>
<div class="t " style="left:938.80px;top:1833.29px;font-size:29.51px;color:#0b57d0;font-weight:400;transform:scaleX(0.9780);">samplerequest_patient_ostomy_esenta</div>
<div class="t " style="left:2472.72px;top:1834.15px;font-size:28.49px;color:#202124;font-weight:400;">1,009.00</div>
<div class="t " style="left:3023.33px;top:1834.15px;font-size:28.49px;color:#202124;font-weight:400;">960</div>
<div class="t " style="left:3494.39px;top:1834.15px;font-size:28.49px;color:#202124;font-weight:400;">£0.00</div>
<div class="t " style="left:806.00px;top:1907.27px;font-size:28.49px;color:#202124;font-weight:400;">5</div>
<div class="t " style="left:937.81px;top:1906.41px;font-size:29.51px;color:#0b57d0;font-weight:400;transform:scaleX(0.9892);">meplus_enrollment_patient</div>
<div class="t " style="left:2496.46px;top:1907.27px;font-size:28.49px;color:#202124;font-weight:400;">518.00</div>
<div class="t " style="left:3023.33px;top:1907.27px;font-size:28.49px;color:#202124;font-weight:400;">486</div>
<div class="t " style="left:3494.39px;top:1907.27px;font-size:28.49px;color:#202124;font-weight:400;">£0.00</div>
<div class="t " style="left:806.00px;top:1980.39px;font-size:28.49px;color:#202124;font-weight:400;">6</div>
<div class="t " style="left:937.82px;top:1979.53px;font-size:29.51px;color:#0b57d0;font-weight:400;transform:scaleX(0.9810);">popup_samplerequest_patient</div>
<div class="t " style="left:2496.46px;top:1980.39px;font-size:28.49px;color:#202124;font-weight:400;">446.00</div>
<div class="t " style="left:3023.33px;top:1980.39px;font-size:28.49px;color:#202124;font-weight:400;">317</div>
<div class="t " style="left:3494.39px;top:1980.39px;font-size:28.49px;color:#202124;font-weight:400;">£0.00</div>
<svg style="position:absolute;left:0.00px;top:0.00px;top:0;left:0;" width="4054.00" height="1991.00" viewBox="0 0 4054 1991"><path d="M537 903.3 629.6 811V857.2H823V949.4H629.6V995.7Z" fill="#b61d72"/></svg>
<div style="position:absolute;left:3965.9px;top:1833.2px;width:79.6px;height:79.6px;border-radius:40px;background:#ffffff;box-shadow:0 1px 3px rgba(60,64,67,.3),0 4px 8px 3px rgba(60,64,67,.15)"></div>
<svg style="position:absolute;left:3984.00px;top:1853.00px;" width="44.00" height="41.00" viewBox="0 0 44 41"><path d="M3.5 3.5h37v26h-28l-9 9z" fill="none" stroke="#3c4043" stroke-width="3.8" stroke-linejoin="round"/><rect x="19.8" y="9" width="4" height="9" fill="#3c4043"/><rect x="19.8" y="21" width="4" height="4" fill="#3c4043"/></svg>
</body></html>
